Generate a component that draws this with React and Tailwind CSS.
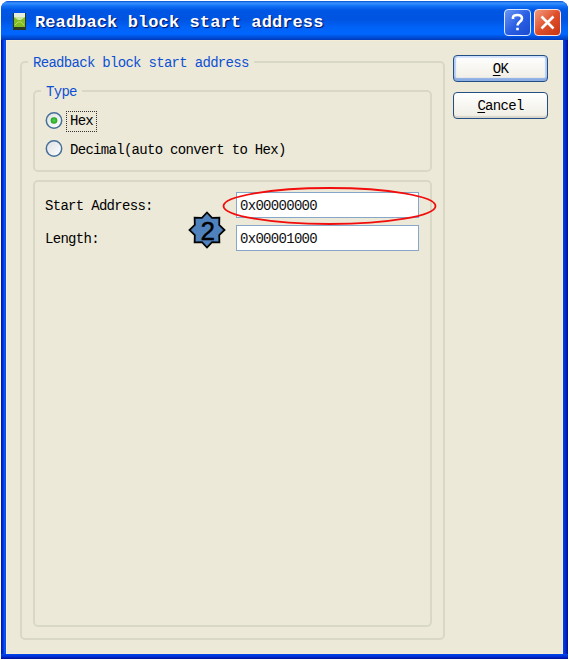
import React from 'react';

const mono = "font-['Liberation_Mono',monospace] text-[14px] tracking-[-0.7px] leading-[20px] whitespace-pre";

function Radio({ checked }) {
  return (
    <svg className="shrink-0" width="18" height="18" viewBox="0 0 18 18">
      <defs>
        <linearGradient id="radioFace" x1="0" y1="0" x2="1" y2="1">
          <stop offset="0" stopColor="#dcdfe2" />
          <stop offset="1" stopColor="#ffffff" />
        </linearGradient>
        <radialGradient id="radioDot">
          <stop offset="0" stopColor="#56d352" />
          <stop offset="1" stopColor="#22a121" />
        </radialGradient>
      </defs>
      <circle cx="9" cy="8.5" r="7.7" fill="url(#radioFace)" stroke="#467098" strokeWidth="1.5" />
      {checked && <circle cx="9" cy="8.5" r="3.3" fill="url(#radioDot)" />}
    </svg>
  );
}

function Field({ value }) {
  return (
    <div className={`${mono} flex h-[26px] w-[183px] items-center border-[1.5px] border-[#86a7c8] bg-white pl-[3px] pt-px text-[#111]`}>
      {value}
    </div>
  );
}

function Legend({ children }) {
  return (
    <span className={`${mono} absolute -top-[10px] left-[6px] bg-[#ece9d8] px-[5px] text-[#0d50d4]`}>{children}</span>
  );
}

function Marker() {
  const points = Array.from({ length: 16 }, (_, i) => {
    const r = i % 2 ? 13.2 : 17.5;
    const a = (i * Math.PI) / 8;
    return `${19 + r * Math.sin(a)},${19 - r * Math.cos(a)}`;
  }).join(' ');
  return (
    <svg className="absolute left-[187.5px] top-[210.5px]" width="38" height="38" viewBox="0 0 38 38">
      <polygon points={points} fill="#4f81bd" stroke="#050505" strokeWidth="1.8" />
      <text x="19.8" y="29" textAnchor="middle" fontSize="26" fontFamily="Liberation Sans, sans-serif" stroke="#000" strokeWidth="0.4">2</text>
    </svg>
  );
}

export default function App() {
  return (
    <div className="relative h-[660px] w-[569px] bg-white pl-px pt-px">
      <div className="flex h-[658px] w-[567px] flex-col overflow-hidden rounded-t-[8px] bg-[linear-gradient(to_right,#0011a8_0,#0032e0_2px,#0d5ef0_4px,#0046e4_5px,#0046e4_562px,#0030d8_564px,#000d96_567px)]">
        <header className="flex h-[39px] shrink-0 items-center bg-[linear-gradient(to_bottom,#0450d0_0,#3c93ff_2px,#1272f4_5px,#0057e5_9px,#0053e1_18px,#0063f8_27px,#0066ff_33px,#0050dc_36px,#003abc_39px)] pl-[12px] pr-[7px] pt-[3px]">
          <svg width="13" height="18" viewBox="0 0 13 18" className="shrink-0">
            <rect x="0" y="0" width="13" height="17" fill="#283822" />
            <rect x="1" y="0" width="11" height="5" fill="#e4efe0" />
            <rect x="1" y="4" width="11" height="10" fill="#85bd26" />
            <path d="M1 4 5 7H8L12 4" fill="#c7e7a2" />
            <path d="M2 12 5 9H8L11 12" stroke="#b2dc5d" fill="none" />
          </svg>
          <h1 className="ml-[9px] flex-1 whitespace-pre pt-[2px] font-['Liberation_Mono',monospace] text-[17px] font-bold leading-[24px] tracking-[0.1px] text-white [text-shadow:1px_1px_1px_#001066]">Readback block start address</h1>
          <div className="flex gap-[3px]">
            <button className="flex h-[27px] w-[27px] items-center justify-center rounded-[4px] border-[1.5px] border-[#dce8ff] bg-linear-to-br from-[#6c96f5] via-[#2c60e4] to-[#184bd0]">
              <svg width="15" height="19" viewBox="0 0 15 19" fill="none" stroke="#fff" strokeWidth="2.6">
                <path d="M3 6V4.5Q3 2 7.5 2T12 5.5C12 8.5 7.5 9 7.5 12.5" />
                <path d="M7.5 14.7V17.3" />
              </svg>
            </button>
            <button className="flex h-[27px] w-[27px] items-center justify-center rounded-[4px] border-[1.5px] border-[#ffe3dc] bg-linear-to-br from-[#f19a7d] via-[#df4f2a] to-[#c83512]">
              <svg width="15" height="15" viewBox="0 0 15 15" stroke="#fff" strokeWidth="2.6">
                <path d="M1.5 1.5 13.5 13.5M13.5 1.5 1.5 13.5" />
              </svg>
            </button>
          </div>
        </header>
        <main className="mx-[5px] flex h-[614px] shrink-0 gap-[8px] border border-[#f6edd4] bg-[#ece9d8] pl-[13px] pt-[20px]">
          <section className="relative h-[579px] w-[425px] shrink-0 rounded-[5px] border-2 border-[#d9d8c6] px-[11px] pt-[27px]">
            <Legend>Readback block start address</Legend>
            <section className="relative flex h-[82px] w-[399px] flex-col rounded-[5px] border-2 border-[#d9d8c6] pl-[10px] pt-[18px]">
              <Legend>Type</Legend>
              <label className="flex h-[22px] items-center gap-[3px]">
                <Radio checked />
                <span className={`${mono} flex h-[21px] w-[31px] items-center justify-center border border-dotted border-[#333] text-black`}>Hex</span>
              </label>
              <label className="mt-[7px] flex h-[20px] items-center gap-[7px]">
                <Radio />
                <span className={`${mono} pt-px text-black`}>Decimal(auto convert to Hex)</span>
              </label>
            </section>
            <section className="mt-[8px] h-[447px] w-[399px] rounded-[5px] border-2 border-[#d9d8c6] pl-[10px] pt-[10px]">
              <div className="flex h-[26px] items-center">
                <span className={`${mono} w-[191px] pt-[2px] text-black`}>Start Address:</span>
                <Field value="0x00000000" />
              </div>
              <div className="mt-[7px] flex h-[26px] items-center">
                <span className={`${mono} w-[191px] pt-[2px] text-black`}>Length:</span>
                <Field value="0x00001000" />
              </div>
            </section>
          </section>
          <div className="-mt-[6px] flex w-[95px] flex-col gap-[10px]">
            <button className={`${mono} h-[27px] rounded-[4px] border-[1.5px] border-[#244f83] bg-linear-to-b from-white to-[#efede3] text-black shadow-[inset_0_-3px_1px_#8caee5,inset_2px_0_1px_#b7cff5,inset_-2px_0_1px_#b7cff5,inset_0_2px_1px_#d5e4ff]`}>
              <u className="underline-offset-2">O</u>K
            </button>
            <button className={`${mono} h-[27px] rounded-[4px] border-[1.5px] border-[#244f83] bg-linear-to-b from-white to-[#efede3] text-black shadow-[inset_0_-2px_1px_#d9d5ca]`}>
              <u className="underline-offset-2">C</u>ancel
            </button>
          </div>
        </main>
        <div className="flex-1 bg-[linear-gradient(to_bottom,#0047ea,#0030d5_50%,#000d96)]" />
      </div>
      <svg className="absolute left-[221px] top-[185px]" width="218" height="42" viewBox="0 0 218 42">
        <ellipse cx="108.5" cy="21" rx="106" ry="18" fill="none" stroke="#f20d0d" strokeWidth="1.8" />
      </svg>
      <Marker />
    </div>
  );
}
